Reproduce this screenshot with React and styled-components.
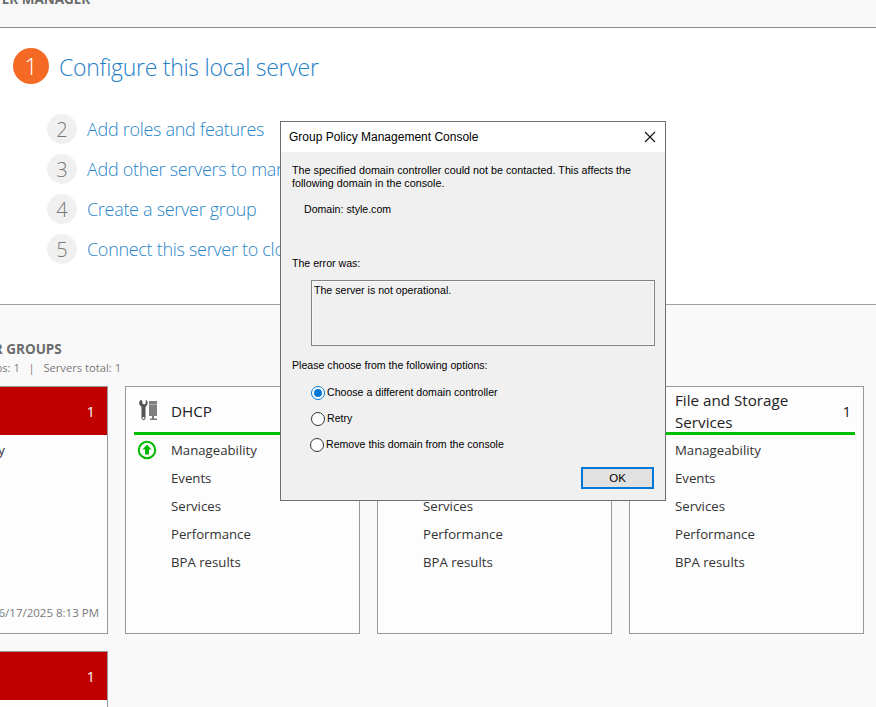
import React from 'react'
import styled, {createGlobalStyle} from 'styled-components'

const GlobalStyle = createGlobalStyle`
  html, body {
    margin: 0;
    height: 100%;
    overflow: hidden;
    background: #f9f9f9;
  }
  #root {
    height: 100%;
  }
`

const Page = styled.div`
  position: relative;
  width: 876px;
  height: 707px;
  overflow: hidden;
  display: flex;
  flex-direction: column;
  font-family: "Open Sans", "Liberation Sans", sans-serif;
  background: #f9f9f9;
`

const TopBar = styled.header`
  flex: none;
  height: 27px;
  border-bottom: 1px solid #8f8f8f;
  background: #f8f8f8;
  display: flex;
  align-items: flex-start;
  overflow: hidden;
`

const AppTitle = styled.h1`
  margin: -11px 0 0 -31px;
  font-size: 13.5px;
  line-height: 20px;
  font-weight: 700;
  color: #6b6b6b;
  white-space: nowrap;
`

const Welcome = styled.section`
  flex: none;
  height: 277px;
  border-bottom: 1px solid #a0a0a0;
  background: #fff;
  padding: 20px 0 0 13px;
  box-sizing: border-box;
`

const MainStep = styled.div`
  display: flex;
  align-items: center;
  gap: 10px;
  height: 36px;
  margin-bottom: 30px;
`

const MainBadge = styled.span`
  flex: none;
  width: 36px;
  height: 36px;
  border-radius: 50%;
  background: #f46a25;
  color: #fff;
  font-size: 23px;
  font-weight: 300;
  display: flex;
  align-items: center;
  justify-content: center;
`

const MainLink = styled.span`
  padding-top: 2px;
  font-size: 23px;
  font-weight: 300;
  letter-spacing: -0.28px;
  color: #1f80c8;
  white-space: nowrap;
`

const StepList = styled.div`
  display: flex;
  flex-direction: column;
  gap: 10px;
  padding-left: 34px;
`

const Step = styled.div`
  display: flex;
  align-items: center;
  gap: 10px;
  height: 30px;
`

const StepBadge = styled.span`
  flex: none;
  width: 30px;
  height: 30px;
  border-radius: 50%;
  background: #f0f0f0;
  color: #777;
  font-size: 20px;
  font-weight: 300;
  display: flex;
  align-items: center;
  justify-content: center;
`

const StepLink = styled.span`
  font-size: 18px;
  font-weight: 300;
  letter-spacing: -0.3px;
  color: #2a86c9;
  white-space: nowrap;
`

const Groups = styled.section`
  flex: 1;
  padding-top: 34px;
  min-height: 0;
`

const GroupsTitle = styled.h2`
  margin: 0 0 0 -126px;
  font-size: 13.5px;
  line-height: 20px;
  font-weight: 700;
  color: #6b6b6b;
  white-space: nowrap;
`

const GroupsStats = styled.div`
  margin: 0 0 10px -89px;
  font-size: 11.2px;
  line-height: 17px;
  color: #7a7a7a;
  white-space: nowrap;
`

const TileGrid = styled.div`
  display: grid;
  grid-template-columns: repeat(4, 235px);
  grid-auto-rows: 248px;
  gap: 17px;
  margin-left: -127px;
`

const Tile = styled.article`
  box-sizing: border-box;
  border: 1px solid #999;
  background: #fdfdfd;
  display: flex;
  flex-direction: column;
`

const TileHead = styled.div`
  flex: none;
  height: 48px;
  box-sizing: border-box;
  display: flex;
  align-items: center;
  padding: 0 8px 0 45px;
  font-size: 15.2px;
  line-height: 22px;
  color: ${p => (p.$alert ? '#f4f4f4' : '#222')};
  background: ${p => (p.$alert ? '#c00000' : 'transparent')};
  position: relative;
`

const TileRule = styled.div`
  flex: none;
  height: 3px;
  margin: -3px 8px 0;
  background: ${p => (p.$alert ? '#c00000' : '#00bd00')};
  position: relative;
`

const TileName = styled.span`
  flex: 1;
`

const TileCount = styled.span`
  font-size: 15px;
  margin-right: 4px;
`

const TileIcon = styled.svg`
  position: absolute;
  left: 12px;
  top: 12px;
`

const Rows = styled.div`
  flex: 1;
  padding: 1px 0 0 45px;
  display: flex;
  flex-direction: column;
`

const Row = styled.div`
  position: relative;
  height: 28px;
  display: flex;
  align-items: center;
  font-size: 13.2px;
  color: #333;
`

const RowIcon = styled.svg`
  position: absolute;
  left: -34px;
  top: 4px;
`

const TileStamp = styled.div`
  flex: none;
  text-align: right;
  padding: 0 8px 12px 0;
  font-size: 11.5px;
  line-height: 16px;
  color: #7a7a7a;
`

const Dialog = styled.div`
  position: absolute;
  left: 280px;
  top: 121px;
  width: 386px;
  height: 380px;
  box-sizing: border-box;
  border: 1px solid #6e6e6e;
  background: #f0f0f0;
  font-family: "Liberation Sans", Arial, sans-serif;
  font-size: 10.6px;
  line-height: 13px;
  color: #000;
  display: flex;
  flex-direction: column;
`

const DialogTitle = styled.div`
  flex: none;
  height: 30px;
  background: #fff;
  display: flex;
  align-items: center;
  justify-content: space-between;
  padding: 0 9px 0 8px;
  font-size: 12px;
`

const CloseButton = styled.svg`
  display: block;
`

const DialogBody = styled.div`
  flex: 1;
  padding: 12px 10px 0 11px;
  display: flex;
  flex-direction: column;
`

const Message = styled.p`
  margin: 0;
  font-size: 10.75px;
`

const DomainLine = styled.p`
  margin: 13px 0 0 12px;
`

const ErrorLabel = styled.p`
  margin: 41px 0 0;
`

const ErrorBox = styled.div`
  margin: 10px 0 0 19px;
  width: 344px;
  height: 66px;
  box-sizing: border-box;
  border: 1px solid #828282;
  padding: 3px 2px;
  box-shadow: inset 0 0 0 1px #f8f8f8;
`

const ChooseLabel = styled.p`
  margin: 13px 0 0;
`

const Options = styled.div`
  margin: 14px 0 0 19px;
  display: flex;
  flex-direction: column;
  gap: 13px;
`

const Option = styled.label`
  display: flex;
  align-items: center;
  gap: 2px;
  height: 13px;
  margin-left: ${p => (p.$outdent ? '-1px' : '0')};
`

const Radio = styled.span`
  flex: none;
  box-sizing: border-box;
  width: 14px;
  height: 14px;
  border-radius: 50%;
  border: 1px solid ${p => (p.$checked ? '#0078d7' : '#333')};
  background: #fff;
  display: flex;
  align-items: center;
  justify-content: center;
  &::after {
    content: '';
    display: ${p => (p.$checked ? 'block' : 'none')};
    width: 8px;
    height: 8px;
    border-radius: 50%;
    background: #0078d7;
  }
`

const DialogActions = styled.div`
  margin-top: 16px;
  display: flex;
  justify-content: flex-end;
`

const OkButton = styled.button`
  width: 73px;
  height: 22px;
  margin-right: 1px;
  padding: 0;
  box-sizing: border-box;
  border: 2px solid #0078d7;
  background: #e1e1e1;
  font: inherit;
  font-size: 11.5px;
  color: #000;
`

const ServerTool = () => (
  <TileIcon width="21" height="22" viewBox="0 0 21 22">
    <path
      fillRule="evenodd"
      d="M2 1.500C0.800 3 0.800 5.500 2.500 7L3.500 7.800V19C3.500 21.500 7.500 21.500 7.500 19V7.800L8.500 7C10 5.500 10 3 8.800 1.500L7.800 1V4.500L6 5.500L4.500 4.500L4 1ZM5.500 18A1 1 0 1 0 5.500 20A1 1 0 1 0 5.500 18Z"
      fill="#555"
    />
    <path d="M11 2H19V17H11Z" fill="#7f7f7f" />
    <path d="M11 5H19V6H11Z" fill="#a8a8a8" />
    <path d="M14 17H16V19.500H19V21H12V19.500H14Z" fill="#777" />
  </TileIcon>
)

const UpStatus = () => (
  <RowIcon width="20" height="20" viewBox="0 0 20 20">
    <circle cx="10" cy="10" r="8.200" fill="none" stroke="#00b800" strokeWidth="2" />
    <path d="M10 4.500L14.500 9.500H12V14.500H8V9.500H5.500Z" fill="#00b800" />
  </RowIcon>
)

const ROWS = ['Manageability', 'Events', 'Services', 'Performance', 'BPA results']

const TileCard = ({name, icon, alert, stamp, status}) => (
  <Tile>
    <TileHead $alert={alert}>
      {icon}
      <TileName>{name}</TileName>
      <TileCount>1</TileCount>
    </TileHead>
    <TileRule $alert={alert} />
    <Rows>
      {ROWS.map((row, i) => (
        <Row key={row}>
          {i === 0 && status}
          {row}
        </Row>
      ))}
    </Rows>
    {stamp && <TileStamp>{stamp}</TileStamp>}
  </Tile>
)

const App = () => (
  <Page>
    <GlobalStyle />
    <TopBar>
      <AppTitle>SERVER MANAGER</AppTitle>
    </TopBar>
    <Welcome>
      <MainStep>
        <MainBadge>1</MainBadge>
        <MainLink>Configure this local server</MainLink>
      </MainStep>
      <StepList>
        <Step><StepBadge>2</StepBadge><StepLink>Add roles and features</StepLink></Step>
        <Step><StepBadge>3</StepBadge><StepLink>Add other servers to manage</StepLink></Step>
        <Step><StepBadge>4</StepBadge><StepLink>Create a server group</StepLink></Step>
        <Step><StepBadge>5</StepBadge><StepLink>Connect this server to cloud services</StepLink></Step>
      </StepList>
    </Welcome>
    <Groups>
      <GroupsTitle>ROLES AND SERVER GROUPS</GroupsTitle>
      <GroupsStats>Roles: 3 &nbsp;|&nbsp; Groups: 1 &nbsp;&nbsp;|&nbsp;&nbsp; Servers total: 1</GroupsStats>
      <TileGrid>
        <TileCard name="AD DS" alert stamp="6/17/2025 8:13 PM" />
        <TileCard name="DHCP" icon={<ServerTool />} status={<UpStatus />} />
        <TileCard name="DNS" />
        <TileCard name="File and Storage Services" />
        <TileCard name="All Servers" alert />
      </TileGrid>
    </Groups>
    <Dialog>
      <DialogTitle>
        Group Policy Management Console
        <CloseButton width="12" height="12" viewBox="0 0 12 12">
          <path d="M1 1L11 11M11 1L1 11" stroke="#111" strokeWidth="1.100" fill="none" />
        </CloseButton>
      </DialogTitle>
      <DialogBody>
        <Message>The specified domain controller could not be contacted. This affects the following domain in the console.</Message>
        <DomainLine>Domain: style.com</DomainLine>
        <ErrorLabel>The error was:</ErrorLabel>
        <ErrorBox>The server is not operational.</ErrorBox>
        <ChooseLabel>Please choose from the following options:</ChooseLabel>
        <Options>
          <Option><Radio $checked />Choose a different domain controller</Option>
          <Option><Radio />Retry</Option>
          <Option $outdent><Radio />Remove this domain from the console</Option>
        </Options>
        <DialogActions>
          <OkButton>OK</OkButton>
        </DialogActions>
      </DialogBody>
    </Dialog>
  </Page>
)

export default App
